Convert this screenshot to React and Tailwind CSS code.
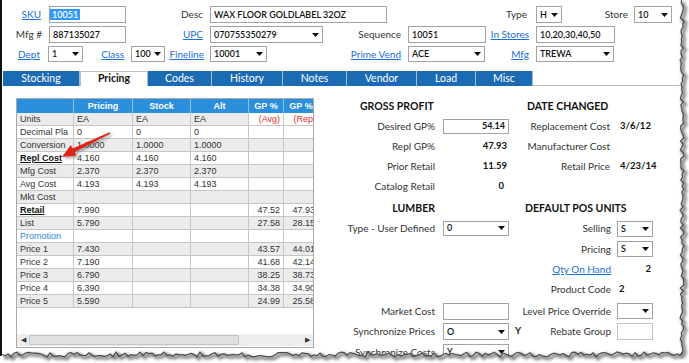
import React from "react";

const LINK = "text-[#1a6fd6] underline";

function Caret() {
  return (
    <svg width="7" height="4" viewBox="0 0 7 4" className="shrink-0">
      <path d="M0 0h7L3.5 4z" fill="#111" />
    </svg>
  );
}

function Box({ className = "", children, select, right }) {
  return (
    <div className={`flex items-center border border-[#a3a3a3] bg-white pl-[3px] text-[9px] font-semibold text-[#111] ${className}`}>
      <span className={`flex-1 truncate whitespace-nowrap ${right ? "pr-[3px] text-right" : ""}`}>{children}</span>
      {select && (
        <span className="flex w-[13px] shrink-0 justify-center">
          <Caret />
        </span>
      )}
    </div>
  );
}

function Lbl({ className = "", link, children }) {
  return (
    <div className={`flex h-full shrink-0 items-center justify-end whitespace-nowrap text-[10px] text-[#333] ${className}`}>
      <span className={link ? LINK : ""}>{children}</span>
    </div>
  );
}

const TABS = ["Stocking", "Pricing", "Codes", "History", "Notes", "Vendor", "Load", "Misc"];
const TAB_W = ["w-[77px]", "w-[68px]", "w-[64px]", "w-[71px]", "w-[64px]", "w-[70px]", "w-[59px]", "w-[57px]"];

const COLS = ["w-[57px]", "w-[59px]", "w-[58px]", "w-[58px]", "w-[35px]", "w-[35px]"];

const ROWS = [
  { l: "Units", c: ["EA", "EA", "EA", "(Avg)", "(Repl"], red: true },
  { l: "Decimal Pla", c: ["0", "0", "0", "", ""] },
  { l: "Conversion", c: ["1.0000", "1.0000", "1.0000", "", ""] },
  { l: "Repl Cost", c: ["4.160", "4.160", "4.160", "", ""], bold: true },
  { l: "Mfg Cost", c: ["2.370", "2.370", "2.370", "", ""] },
  { l: "Avg Cost", c: ["4.193", "4.193", "4.193", "", ""] },
  { l: "Mkt Cost", c: ["", "", "", "", ""] },
  { l: "Retail", c: ["7.990", "", "", "47.52", "47.93"], bold: true },
  { l: "List", c: ["5.790", "", "", "27.58", "28.15"] },
  { l: "Promotion", c: ["", "", "", "", ""], blue: true },
  { l: "Price 1", c: ["7.430", "", "", "43.57", "44.01"] },
  { l: "Price 2", c: ["7.190", "", "", "41.68", "42.14"] },
  { l: "Price 3", c: ["6.790", "", "", "38.25", "38.73"] },
  { l: "Price 4", c: ["6.390", "", "", "34.38", "34.90"] },
  { l: "Price 5", c: ["5.590", "", "", "24.99", "25.58"] },
];

function PriceTable() {
  return (
    <div className="flex h-[250px] w-[298px] shrink-0 flex-col overflow-hidden border border-[#a9a9a9] bg-white font-['Liberation_Sans',Arial,sans-serif] text-[9px] text-[#333]">
      <div className="flex h-[14px] shrink-0 bg-[#2b8fdb] font-bold text-white">
        {["", "Pricing", "Stock", "Alt", "GP %", "GP %"].map((h, i) => (
          <div key={i} className={`${COLS[i]} shrink-0 border-r border-[#8fc3ea] text-center leading-[14px]`}>
            {h}
          </div>
        ))}
      </div>
      {ROWS.map((r, ri) => (
        <div key={ri} className={`flex h-[13px] shrink-0 ${ri % 2 === 0 ? "bg-[#ebebeb]" : "bg-white"}`}>
          <div className={`${COLS[0]} shrink-0 overflow-hidden whitespace-nowrap border-r border-b border-[#c6c6c6] px-[3px] leading-[12px]`}>
            <span className={r.bold ? "font-bold text-[#111] underline" : r.blue ? "text-[#2f86d6]" : ""}>{r.l}</span>
          </div>
          {r.c.map((v, i) => (
            <div
              key={i}
              className={`${COLS[i + 1]} shrink-0 overflow-hidden whitespace-nowrap border-r border-b border-[#c6c6c6] px-[3px] leading-[12px] ${i >= 3 ? "text-right" : ""} ${r.red && i >= 3 ? "bg-white text-[#e0302a]" : ""}`}
            >
              {v}
            </div>
          ))}
        </div>
      ))}
      <div className="flex-1" />
      <div className="mb-[1px] flex h-[12px] shrink-0 items-center bg-[#ededed]">
        <div className="flex w-[12px] justify-center text-[7px] text-[#333]">◀</div>
        <div className="h-[10px] w-[210px] rounded-[1px] border border-[#c4c4c4] bg-[#e0e0e0]" />
        <div className="flex-1 bg-[#f3f3f3]" />
        <div className="flex w-[12px] justify-center text-[7px] text-[#333]">▶</div>
      </div>
    </div>
  );
}

function Row({ h = "h-[20px]", label, labelW = "w-[85px]", gap = "ml-[8px]", link, children }) {
  return (
    <div className={`flex shrink-0 items-center ${h}`}>
      <Lbl className={labelW} link={link}>{label}</Lbl>
      <div className={`flex items-center ${gap}`}>{children}</div>
    </div>
  );
}

function Val({ className = "", children }) {
  return <div className={`text-[9.5px] font-bold text-[#111] ${className}`}>{children}</div>;
}

function rnd(i) {
  const x = Math.sin(i * 12.9898 + 4.1) * 43758.5453;
  return x - Math.floor(x);
}

function TornEdge() {
  const right = [];
  for (let y = 0, i = 0; y <= 354; y += 3, i++) right.push([680 + rnd(i) * 4, y]);
  const bottom = [];
  for (let x = 683, i = 200; x >= 0; x -= 3, i++) bottom.push([x, 352 + rnd(i) * 5]);
  const pts = right.concat(bottom);
  const edge = pts.map((p, i) => `${i ? "L" : "M"}${p[0].toFixed(1)} ${p[1].toFixed(1)}`).join(" ");
  const outside = `M689 0 ${pts.map((p) => `L${p[0].toFixed(1)} ${p[1].toFixed(1)}`).join(" ")} L0 363 L689 363 Z`;
  return (
    <svg className="pointer-events-none absolute left-0 top-0" width="689" height="363">
      <defs>
        <filter id="blur" x="-10%" y="-10%" width="120%" height="120%">
          <feGaussianBlur stdDeviation="1.6" />
        </filter>
        <filter id="ablur">
          <feGaussianBlur stdDeviation="0.8" />
        </filter>
      </defs>
      <rect x="0" y="0" width="2" height="356" fill="#111" />
      <path d={outside} fill="#fff" />
      <path d={edge} transform="translate(2 2)" fill="none" stroke="#777" strokeWidth="3" filter="url(#blur)" />
      <path d={edge} fill="none" stroke="#4a4a4a" strokeWidth="1.2" />
    </svg>
  );
}

function RedArrow() {
  const pts = "62,157 76.5,155.5 74.6,152.1 110.4,133.7 109.6,132.3 72.6,148.4 70.8,145";
  return (
    <svg className="pointer-events-none absolute left-0 top-0" width="689" height="363">
      <polygon points={pts} transform="translate(2 2)" fill="#555" opacity="0.45" filter="url(#ablur)" />
      <polygon points={pts} fill="#e3241b" />
    </svg>
  );
}

export default function App() {
  return (
    <div className="relative h-[363px] w-[689px] overflow-hidden bg-white font-['Lato','Open_Sans',sans-serif] text-[#333]">
      <div className="flex flex-col pt-[6px]">
        <div className="flex h-[17px] items-center">
          <Lbl className="w-[49px] pr-[8px]" link>SKU</Lbl>
          <Box className="h-[17px] w-[77px] !pl-0">
            <span className="bg-[#3399ff] px-[2px] text-white">10051</span>
          </Box>
          <Lbl className="w-[84px] pr-[7px]">Desc</Lbl>
          <Box className="h-[17px] w-[177px]">WAX FLOOR GOLDLABEL 32OZ</Box>
          <Lbl className="w-[149px] pr-[9px]">Type</Lbl>
          <Box className="h-[17px] w-[26px]" select>H</Box>
          <Lbl className="w-[72px] pr-[6px]">Store</Lbl>
          <Box className="h-[17px] w-[38px]" select>10</Box>
        </div>
        <div className="mt-[3px] flex h-[17px] items-center">
          <Lbl className="w-[49px] pr-[7px]">Mfg #</Lbl>
          <Box className="h-[17px] w-[77px]">887135027</Box>
          <Lbl className="w-[84px] pr-[7px]" link>UPC</Lbl>
          <Box className="h-[17px] w-[113px]" select>070755350279</Box>
          <Lbl className="w-[85px] pr-[7px]">Sequence</Lbl>
          <Box className="h-[17px] w-[78px]">10051</Box>
          <Lbl className="w-[50px] pr-[7px]" link>In Stores</Lbl>
          <Box className="h-[17px] w-[79px]">10,20,30,40,50</Box>
        </div>
        <div className="mt-[3px] flex h-[16px] items-center">
          <Lbl className="w-[48px] pr-[8px]" link>Dept</Lbl>
          <Box className="h-[16px] w-[35px]" select>1</Box>
          <Lbl className="w-[48px] pr-[7px]" link>Class</Lbl>
          <Box className="h-[16px] w-[34px]" select>100</Box>
          <Lbl className="w-[45px] pr-[6px]" link>Fineline</Lbl>
          <Box className="h-[16px] w-[57px]" select>10001</Box>
          <Lbl className="w-[141px] pr-[7px]" link>Prime Vend</Lbl>
          <Box className="h-[16px] w-[77px]" select>ACE</Box>
          <Lbl className="w-[51px] pr-[7px]" link>Mfg</Lbl>
          <Box className="h-[16px] w-[78px]" select>TREWA</Box>
        </div>

        <div className="ml-[3px] mt-[9px] flex h-[15px] items-stretch">
          {TABS.map((t, i) =>
            t === "Pricing" ? (
              <div key={t} className={`${TAB_W[i]} flex items-center justify-center border-x border-t border-[#bdbdbd] bg-white text-[10.5px] font-bold text-[#111]`}>
                {t}
              </div>
            ) : (
              <div key={t} className={`${TAB_W[i]} flex items-center justify-center border-r border-[#9fbfdf] bg-[#1b6ab4] text-[10.5px] text-white`}>
                {t}
              </div>
            )
          )}
          <div className="w-[147px] border-b border-[#b9b9b9]" />
        </div>

        <div className="mt-[12px] flex">
          <div className="ml-[16px]">
            <PriceTable />
          </div>

          <div className="ml-[36px] flex">
            <div className="flex w-[170px] flex-col">
              <div className="flex h-[18px] items-center pl-[10px] text-[10.5px] font-bold text-[#111]">GROSS PROFIT</div>
              <Row label="Desired GP%">
                <Box className="h-[15px] w-[66px]" right>
                  <span className="font-bold">54.14</span>
                </Box>
              </Row>
              <Row label="Repl GP%">
                <Val className="w-[64px] text-right">47.93</Val>
              </Row>
              <Row label="Prior Retail">
                <Val className="w-[64px] text-right">11.59</Val>
              </Row>
              <Row label="Catalog Retail">
                <Val className="w-[61px] text-right">0</Val>
              </Row>
              <div className="h-[3px]" />
              <div className="flex h-[19px] w-[85px] items-center justify-end text-[10.5px] font-bold text-[#111]">LUMBER</div>
              <Row label="Type - User Defined">
                <Box className="h-[15px] w-[66px]" select>0</Box>
              </Row>
              <div className="h-[63px]" />
              <Row label="Market Cost">
                <Box className="h-[17px] w-[66px]" />
              </Row>
              <Row h="h-[21px]" label="Synchronize Prices">
                <Box className="h-[17px] w-[66px]" select>O</Box>
                <Val className="ml-[6px]">Y</Val>
              </Row>
              <Row label="Synchronize Costs">
                <Box className="h-[17px] w-[66px]" select>Y</Box>
              </Row>
            </div>

            <div className="flex w-[160px] flex-col">
              <div className="flex h-[18px] items-center pl-[7px] text-[10.5px] font-bold text-[#111]">DATE CHANGED</div>
              <Row label="Replacement Cost" labelW="w-[90px]" gap="ml-[10px]">
                <Val>3/6/12</Val>
              </Row>
              <Row label="Manufacturer Cost" labelW="w-[90px]" gap="ml-[10px]" />
              <Row label="Retail Price" labelW="w-[90px]" gap="ml-[10px]">
                <Val>4/23/14</Val>
              </Row>
              <div className="h-[23px]" />
              <div className="flex h-[19px] items-center pl-[5px] text-[10.5px] font-bold text-[#111]">DEFAULT POS UNITS</div>
              <Row h="h-[21px]" label="Selling" labelW="w-[91px]" gap="ml-[6px]">
                <Box className="h-[16px] w-[36px]" select>S</Box>
              </Row>
              <Row label="Pricing" labelW="w-[91px]" gap="ml-[6px]">
                <Box className="h-[16px] w-[36px]" select>S</Box>
              </Row>
              <Row label="Qty On Hand" labelW="w-[91px]" gap="ml-[6px]" link>
                <Val className="w-[34px] text-right">2</Val>
              </Row>
              <Row label="Product Code" labelW="w-[91px]" gap="ml-[8px]">
                <Val>2</Val>
              </Row>
              <div className="h-[2px]" />
              <Row label="Level Price Override" labelW="w-[91px]" gap="ml-[6px]">
                <Box className="h-[16px] w-[36px]" select />
              </Row>
              <Row label="Rebate Group" labelW="w-[91px]" gap="ml-[6px]">
                <Box className="h-[17px] w-[36px] border-[#c4c4c4]" />
              </Row>
            </div>
          </div>
        </div>
      </div>
      <TornEdge />
      <RedArrow />
    </div>
  );
}
